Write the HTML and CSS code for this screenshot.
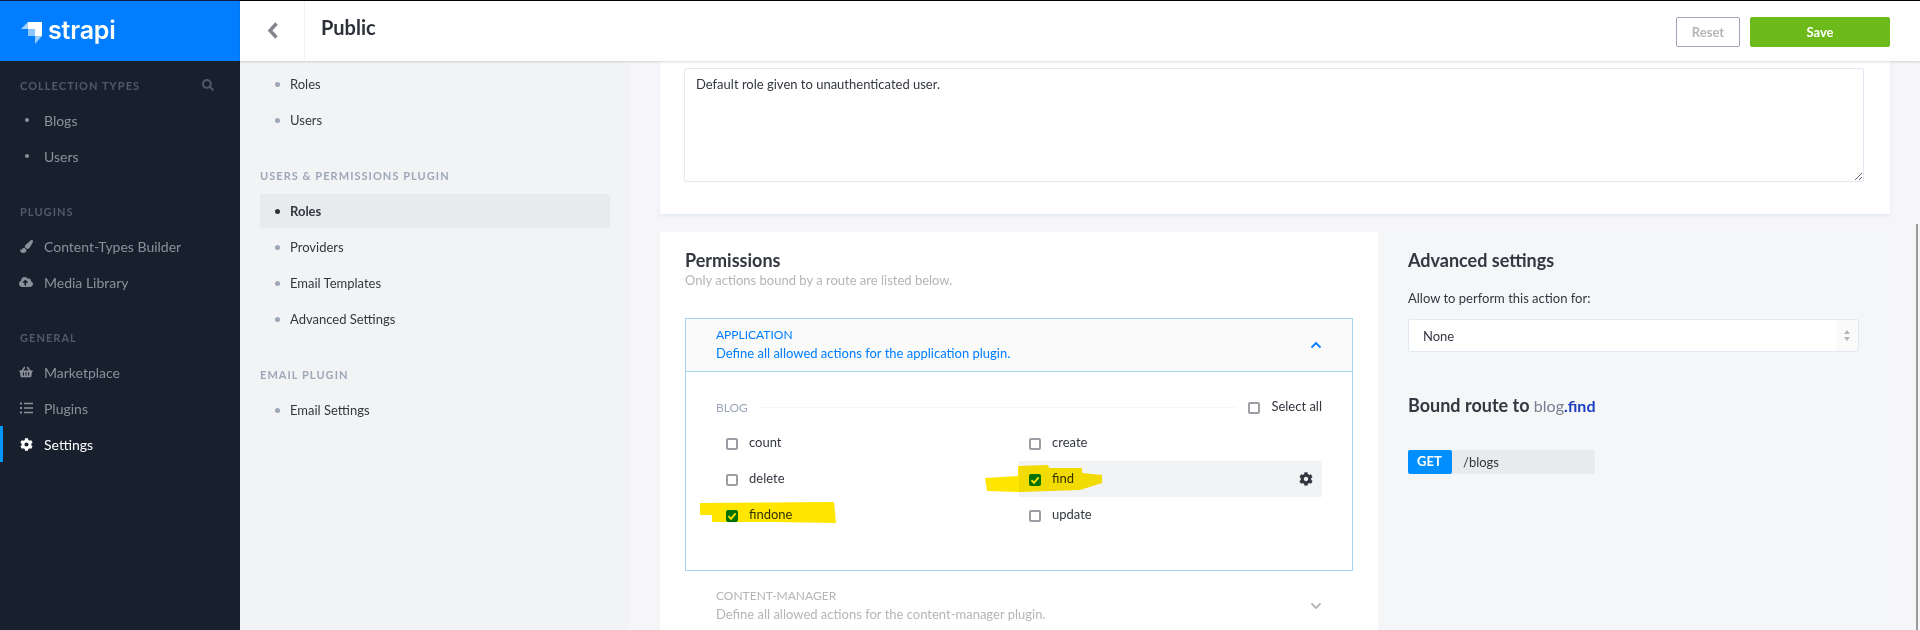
FILE: index.html
```html
<!DOCTYPE html>
<html>
  <head>
    <title>Public - Strapi</title>
    <link rel="stylesheet" href="styles.css">
  </head>
  <body>
    <svg class="defs" width="0" height="0">
      <symbol id="cog" viewBox="0 0 512 512"><path d="M487.4 315.7l-42.6-24.6c4.3-23.2 4.3-47 0-70.2l42.6-24.6c4.9-2.8 7.1-8.6 5.5-14-11.1-35.6-30-67.8-54.7-94.6-3.8-4.1-10-5.1-14.8-2.3L380.8 110c-17.9-15.4-38.5-27.3-60.8-35.1V25.8c0-5.6-3.9-10.5-9.4-11.7-36.7-8.2-74.3-7.8-109.2 0-5.5 1.2-9.4 6.1-9.4 11.7V75c-22.2 7.9-42.8 19.8-60.8 35.1L88.7 85.5c-4.9-2.8-11-1.9-14.8 2.3-24.7 26.7-43.6 58.9-54.7 94.6-1.7 5.4.6 11.2 5.5 14L67.3 221c-4.3 23.2-4.3 47 0 70.2l-42.6 24.6c-4.9 2.8-7.1 8.6-5.5 14 11.1 35.6 30 67.8 54.7 94.6 3.8 4.1 10 5.1 14.8 2.3l42.6-24.6c17.9 15.4 38.5 27.3 60.8 35.1v49.2c0 5.6 3.9 10.5 9.4 11.7 36.7 8.2 74.3 7.8 109.2 0 5.5-1.2 9.4-6.1 9.4-11.7v-49.2c22.2-7.9 42.8-19.8 60.8-35.1l42.6 24.6c4.9 2.8 11 1.9 14.8-2.3 24.7-26.7 43.6-58.9 54.7-94.6 1.5-5.5-.7-11.3-5.6-14.1zM256 336c-44.1 0-80-35.9-80-80s35.9-80 80-80 80 35.9 80 80-35.9 80-80 80z"/></symbol>
      <symbol id="tick" viewBox="0 0 12 12"><path d="M2.5 6.2l2.5 2.6 4.6-5.4" fill="none" stroke="#fff" stroke-width="1.8"/></symbol>
    </svg>

    <!-- Left sidebar -->
    <aside class="sidebar">
      <div class="brand">
        <svg class="brand-mark" width="22" height="23" viewBox="0 0 22 23">
          <path d="M7 0H21V14H14V7H7Z" fill="#fff"/>
          <path d="M7 0V7H0Z" fill="#fff" opacity=".65"/>
          <path d="M7 7H14V14H7Z" fill="#fff" opacity=".55"/>
          <path d="M14 14H21L14 22Z" fill="#fff" opacity=".6"/>
        </svg>
        <span class="brand-name">strapi</span>
      </div>
      <nav class="side-nav">
        <div class="side-title">
          <span>Collection Types</span>
          <svg class="side-search" width="12" height="12" viewBox="0 0 512 512"><path d="M505 442.7L405.3 343c-4.5-4.5-10.6-7-17-7H372c27.6-35.3 44-79.7 44-128C416 93.1 322.9 0 208 0S0 93.1 0 208s93.1 208 208 208c48.3 0 92.7-16.4 128-44v16.3c0 6.4 2.5 12.5 7 17l99.7 99.7c9.4 9.4 24.6 9.4 33.9 0l28.3-28.3c9.4-9.4 9.4-24.6.1-34zM208 336c-70.7 0-128-57.2-128-128 0-70.7 57.2-128 128-128 70.7 0 128 57.2 128 128 0 70.7-57.2 128-128 128z"/></svg>
        </div>
        <a class="side-link"><span class="side-icon"><i class="side-dot"></i></span>Blogs</a>
        <a class="side-link"><span class="side-icon"><i class="side-dot"></i></span>Users</a>

        <div class="side-title side-gap"><span>Plugins</span></div>
        <a class="side-link">
          <span class="side-icon"><svg width="13" height="13" viewBox="0 0 512 512"><path d="M167.02 309.34c-40.12 2.58-76.53 17.86-97.19 72.3-2.35 6.21-8 9.98-14.59 9.98-11.11 0-45.46-27.67-55.25-34.35C0 439.62 37.93 512 128 512c75.86 0 128-43.77 128-120.19 0-3.11-.65-6.08-.97-9.13l-88.01-73.34zM457.89 0c-15.16 0-29.37 6.71-40.21 16.45C213.27 199.05 192 203.34 192 257.09c0 13.7 3.25 26.76 8.73 38.7l63.82 53.18c7.21 1.8 14.64 3.03 22.39 3.03 62.11 0 98.11-45.47 211.16-256.46 7.38-14.35 13.9-29.85 13.9-45.99C512 20.64 486 0 457.89 0z"/></svg></span>
          Content-Types Builder
        </a>
        <a class="side-link">
          <span class="side-icon"><svg width="14" height="12" viewBox="0 0 640 512"><path d="M537.6 226.6c4.1-10.7 6.4-22.4 6.4-34.6 0-53-43-96-96-96-19.7 0-38.1 6-53.3 16.2C367 64.2 315.3 32 256 32c-88.4 0-160 71.6-160 160 0 2.7.1 5.4.2 8.1C40.2 219.8 0 273.2 0 336c0 79.5 64.5 144 144 144h368c70.7 0 128-57.3 128-128 0-61.9-44-113.6-102.4-125.4zM393.4 288H328v112c0 8.8-7.2 16-16 16h-48c-8.8 0-16-7.2-16-16V288h-65.4c-14.3 0-21.4-17.2-11.3-27.3l105.4-105.4c6.2-6.2 16.4-6.2 22.6 0l105.4 105.4c10.1 10.1 2.9 27.3-11.3 27.3z"/></svg></span>
          Media Library
        </a>

        <div class="side-title side-gap"><span>General</span></div>
        <a class="side-link">
          <span class="side-icon"><svg width="14" height="12" viewBox="0 0 576 512"><path d="M576 216v16c0 13.255-10.745 24-24 24h-8l-26.113 182.788C514.509 462.435 494.257 480 470.37 480H105.63c-23.887 0-44.139-17.565-47.518-41.212L32 256h-8c-13.255 0-24-10.745-24-24v-16c0-13.255 10.745-24 24-24h67.341l106.78-146.821c10.395-14.292 30.407-17.453 44.701-7.058 14.293 10.395 17.453 30.408 7.058 44.701L170.477 192h235.046L326.12 82.821c-10.395-14.292-7.234-34.306 7.059-44.701 14.291-10.395 34.306-7.235 44.701 7.058L484.659 192H552c13.255 0 24 10.745 24 24zM312 392V280c0-13.255-10.745-24-24-24s-24 10.745-24 24v112c0 13.255 10.745 24 24 24s24-10.745 24-24zm112 0V280c0-13.255-10.745-24-24-24s-24 10.745-24 24v112c0 13.255 10.745 24 24 24s24-10.745 24-24zm-224 0V280c0-13.255-10.745-24-24-24s-24 10.745-24 24v112c0 13.255 10.745 24 24 24s24-10.745 24-24z"/></svg></span>
          Marketplace
        </a>
        <a class="side-link">
          <span class="side-icon"><svg width="13" height="12" viewBox="0 0 13 12"><path d="M0 0.5h2v2H0zM4 0.7h9v1.6H4zM0 5h2v2H0zM4 5.2h9v1.6H4zM0 9.5h2v2H0zM4 9.7h9v1.6H4z"/></svg></span>
          Plugins
        </a>
        <a class="side-link side-link-active">
          <span class="side-icon"><svg width="13" height="13"><use href="#cog"/></svg></span>
          Settings
        </a>
      </nav>
    </aside>

    <div class="main">
      <!-- Top bar -->
      <header class="topbar">
        <button class="back-btn">
          <svg width="12" height="17" viewBox="0 0 12 17"><path d="M9.5 1.5L3 8.5l6.500 7" fill="none" stroke="#81848a" stroke-width="3.400"/></svg>
        </button>
        <h1 class="page-title">Public</h1>
        <div class="top-actions">
          <button class="btn-reset">Reset</button>
          <button class="btn-save">Save</button>
        </div>
      </header>

      <div class="body">
        <!-- Settings sub navigation -->
        <nav class="subnav">
          <a class="sub-link">Roles</a>
          <a class="sub-link">Users</a>
          <div class="sub-title">Users &amp; Permissions Plugin</div>
          <a class="sub-link sub-link-active">Roles</a>
          <a class="sub-link">Providers</a>
          <a class="sub-link">Email Templates</a>
          <a class="sub-link">Advanced Settings</a>
          <div class="sub-title sub-title-tight">Email Plugin</div>
          <a class="sub-link">Email Settings</a>
        </nav>

        <main class="content">
          <section class="desc-card">
            <textarea class="desc-input">Default role given to unauthenticated user.</textarea>
          </section>

          <section class="perm-card">
            <div class="perm-left">
              <h2 class="card-title">Permissions</h2>
              <p class="card-sub">Only actions bound by a route are listed below.</p>

              <div class="acc acc-open">
                <div class="acc-head">
                  <div>
                    <div class="acc-name">Application</div>
                    <div class="acc-desc">Define all allowed actions for the application plugin.</div>
                  </div>
                  <svg class="acc-arrow" width="12" height="8" viewBox="0 0 12 8"><path d="M1.500 6.500L6 2l4.500 4.500" fill="none" stroke="#007eff" stroke-width="1.800"/></svg>
                </div>
                <div class="acc-body">
                  <div class="ctrl-head">
                    <span class="ctrl-name">Blog</span>
                    <span class="ctrl-line"></span>
                    <label class="select-all"><span class="box"></span>Select all</label>
                  </div>
                  <div class="perm-grid">
                    <label class="perm"><span class="box"></span>count</label>
                    <label class="perm"><span class="box"></span>create</label>
                    <label class="perm"><span class="box"></span>delete</label>
                    <label class="perm perm-hover">
                      <span class="box box-on"><svg width="12" height="12"><use href="#tick"/></svg></span>find
                      <svg class="perm-cog" width="14" height="14"><use href="#cog"/></svg>
                      <svg class="marker marker-find" width="117" height="27" viewBox="0 0 117 27"><path d="M33 1L63 0L64 3L97 3L97 8L117 10L117 18L95 25L35 27L2 26L0 13L33 11Z"/></svg>
                    </label>
                    <label class="perm">
                      <span class="box box-on"><svg width="12" height="12"><use href="#tick"/></svg></span>findone
                      <svg class="marker marker-findone" width="136" height="21" viewBox="0 0 136 21"><path d="M0 1L134 0L136 21L75 20L12 20L12 13L0 13Z"/></svg>
                    </label>
                    <label class="perm"><span class="box"></span>update</label>
                  </div>
                </div>
              </div>

              <div class="acc">
                <div class="acc-head">
                  <div>
                    <div class="acc-name">Content-Manager</div>
                    <div class="acc-desc">Define all allowed actions for the content-manager plugin.</div>
                  </div>
                  <svg class="acc-arrow" width="12" height="8" viewBox="0 0 12 8"><path d="M1.500 1.500L6 6l4.500-4.500" fill="none" stroke="#b3b5b9" stroke-width="1.800"/></svg>
                </div>
              </div>
            </div>

            <div class="perm-right">
              <h2 class="card-title">Advanced settings</h2>
              <div class="field-label">Allow to perform this action for:</div>
              <div class="select-wrap">
                <select class="select"><option>None</option></select>
                <span class="select-arrows">
                  <svg width="6" height="11" viewBox="0 0 6 11"><path d="M3 0l3 4H0zM3 11L0 7h6z" fill="#b3b5bb"/></svg>
                </span>
              </div>
              <h2 class="card-title route-title">Bound route to <span class="route-ctrl">blog</span><span class="route-act">.find</span></h2>
              <div class="route">
                <span class="route-verb">GET</span>
                <span class="route-path">/blogs</span>
              </div>
            </div>
          </section>
        </main>
      </div>
    </div>

    <div class="scroll-thumb"></div>
  </body>
</html>
```

FILE: styles.css
```css
/* Page frame */
* {
  box-sizing: border-box;
}

html,
body {
  height: 100%;
}

body {
  margin: 0;
  display: flex;
  height: 630px;
  overflow: hidden;
  background-color: #f6f6f9;
  color: #333740;
  font-family: Lato, "Open Sans", sans-serif;
  font-size: 13px;
}

.defs {
  position: absolute;
}

/* Sidebar */
.sidebar {
  flex: 0 0 240px;
  background-color: #18202e;
}

.brand {
  display: flex;
  align-items: center;
  height: 61px;
  padding-left: 21px;
  background-color: #007eff;
  border-top: 1px solid #0b1c4a;
}

.brand-name {
  margin: -3px 0 0 5px;
  color: #fff;
  font-family: Inter, sans-serif;
  font-size: 25px;
  font-weight: 600;
  letter-spacing: -0.2px;
}

.brand-mark {
  margin-top: 4px;
}

.side-nav {
  padding-top: 15px;
}

.side-title {
  display: flex;
  align-items: center;
  justify-content: space-between;
  height: 18px;
  margin-bottom: 8px;
  padding: 0 26px 0 20px;
  color: #535a67;
  font-size: 11px;
  font-weight: 700;
  letter-spacing: 1.05px;
  text-transform: uppercase;
}

.side-gap {
  margin-top: 28px;
}

.side-search {
  fill: #535a67;
}

.side-link {
  display: flex;
  align-items: center;
  height: 36px;
  padding-left: 19px;
  color: #8b919c;
  font-size: 14px;
}

.side-link svg {
  fill: #8b919c;
}

.side-icon {
  display: flex;
  align-items: center;
  justify-content: center;
  width: 14px;
  margin-right: 11px;
}

.side-dot {
  width: 4px;
  height: 4px;
  margin-left: 2px;
  border-radius: 50%;
  background-color: #8b919c;
}

.side-link-active {
  color: #fff;
  box-shadow: inset 3px 0 0 #0097f7;
}

.side-link-active svg {
  fill: #fff;
}

/* Main column */
.main {
  display: flex;
  flex: 1;
  flex-direction: column;
  min-width: 0;
}

.topbar {
  position: relative;
  z-index: 2;
  display: flex;
  flex: 0 0 61px;
  background-color: #fff;
  border-top: 1px solid #000;
  box-shadow: 0 1px 2px rgba(40, 42, 49, 0.18);
}

.back-btn {
  width: 65px;
  padding: 0 0 0 1px;
  background: none;
  border: none;
  border-right: 1px solid #f3f3f4;
}

.back-btn svg {
  margin-top: 1px;
}

.page-title {
  margin: 12px 0 0 16px;
  color: #2c3039;
  font-size: 20px;
  font-weight: 700;
  line-height: 28px;
}

.top-actions {
  display: flex;
  gap: 10px;
  margin: 16px 30px 0 auto;
}

.top-actions button {
  height: 30px;
  border-radius: 2px;
  font-family: inherit;
  font-size: 13px;
  font-weight: 700;
}

.btn-reset {
  width: 64px;
  background-color: #fff;
  border: 1px solid #9ea7b8;
  color: #b4b6ba;
}

.btn-save {
  width: 140px;
  background-color: #6dbb1a;
  border: none;
  color: #fff;
}

.body {
  display: flex;
  flex: 1;
  min-height: 0;
}

/* Settings sub navigation */
.subnav {
  flex: 0 0 389px;
  padding: 5px 19px 0 20px;
  background-color: #f2f3f4;
}

.sub-link {
  display: flex;
  align-items: center;
  gap: 10px;
  height: 36px;
  padding-left: 15px;
  color: #333740;
  font-size: 13px;
}

.sub-link::before {
  content: "";
  width: 5px;
  height: 5px;
  border-radius: 50%;
  background-color: #9ea7b8;
}

.sub-link-active {
  height: 34px;
  margin: 1px 0;
  border-radius: 2px;
  background-color: #e9eaeb;
  font-weight: 700;
}

.sub-link-active::before {
  background-color: #2d3138;
}

.sub-title {
  height: 18px;
  margin: 29px 0 9px;
  color: #9ea7b8;
  font-size: 11px;
  font-weight: 700;
  letter-spacing: 1.05px;
  line-height: 18px;
  text-transform: uppercase;
}

.sub-title-tight {
  margin-bottom: 8px;
}

/* Content */
.content {
  flex: 1;
  min-width: 0;
  padding: 0 30px 0 31px;
}

.desc-card {
  height: 153px;
  padding: 7px 26px 0 24px;
  background-color: #fff;
  box-shadow: 0 2px 4px #e3e9f3;
}

.desc-input {
  display: block;
  width: 100%;
  height: 114px;
  padding: 7px 11px;
  border: 1px solid #e3e9f3;
  border-radius: 2px;
  color: #333740;
  font-family: inherit;
  font-size: 13px;
  line-height: 16px;
  outline: none;
}

.perm-card {
  display: flex;
  height: 398px;
  margin-top: 18px;
}

.perm-left {
  flex: 0 0 718px;
  padding: 17px 25px 0;
  background-color: #fff;
}

.perm-right {
  flex: 1;
  padding: 17px 31px 0 30px;
  background-color: #f5f6f8;
}

.card-title {
  margin: 0;
  color: #333740;
  font-size: 18px;
  font-weight: 700;
  line-height: 22px;
}

.card-sub {
  margin: 0 0 29px;
  color: #b3b5b9;
  font-size: 13px;
  line-height: 18px;
}

/* Accordion */
.acc {
  margin-bottom: 8px;
  border: 1px solid transparent;
}

.acc-open {
  border-color: #a5d5ee;
}

.acc-head {
  display: flex;
  align-items: center;
  justify-content: space-between;
  height: 53px;
  padding: 8px 30px 9px;
  color: #b3b5b9;
}

.acc-open .acc-head {
  background-color: #fafafb;
  border-bottom: 1px solid #a5d5ee;
  color: #007eff;
}

.acc-name {
  font-size: 12px;
  line-height: 16px;
  text-transform: uppercase;
}

.acc-desc {
  font-size: 13px;
  line-height: 20px;
}

.acc-body {
  height: 198px;
  padding: 23px 30px 0;
}

.ctrl-head {
  display: flex;
  align-items: center;
  height: 24px;
  margin-bottom: 6px;
}

.ctrl-name {
  color: #9ea7b8;
  font-size: 12px;
  text-transform: uppercase;
}

.ctrl-line {
  flex: 1;
  height: 1px;
  margin: 0 12px;
  background-color: #f6f6f6;
}

.select-all {
  display: flex;
  align-items: center;
  gap: 11px;
  height: 24px;
  padding-bottom: 2px;
  color: #333740;
}

.perm-grid {
  display: grid;
  grid-template-columns: 303px 303px;
  grid-auto-rows: 36px;
}

.perm {
  position: relative;
  display: flex;
  align-items: center;
  gap: 11px;
  padding: 0 0 2px 10px;
  color: #333740;
}

.perm-hover {
  background-color: #f2f3f4;
}

.perm-cog {
  margin: 2px 9px 0 auto;
  fill: #333740;
}

.box {
  display: block;
  flex: 0 0 12px;
  width: 12px;
  height: 12px;
  margin-top: 4px;
  border: 2px solid #9c9ea4;
  border-radius: 2px;
  background-color: #fff;
}

.box svg {
  display: block;
  margin: -2px;
}

.box-on {
  background-color: #007eff;
  border-color: #007eff;
}

/* Highlighter strokes painted over the screenshot */
.marker {
  position: absolute;
  fill: #ffe600;
  mix-blend-mode: multiply;
  pointer-events: none;
}

.marker-find {
  left: -34px;
  top: 4px;
}

.marker-findone {
  left: -16px;
  top: 5px;
}

/* Advanced settings panel */
.field-label {
  margin-top: 18px;
  color: #333740;
  line-height: 18px;
}

.select-wrap {
  position: relative;
  height: 33px;
  margin-top: 12px;
}

.select {
  width: 100%;
  height: 33px;
  padding: 0 14px;
  appearance: none;
  background-color: #fff;
  border: 1px solid #e3e9f3;
  border-radius: 2px;
  color: #333740;
  font-family: inherit;
  font-size: 13px;
}

.select-arrows {
  position: absolute;
  top: 1px;
  right: 1px;
  bottom: 1px;
  display: flex;
  align-items: center;
  justify-content: center;
  width: 22px;
  background-color: #fafafb;
}

.route-title {
  margin-top: 42px;
}

.route-ctrl {
  color: #787e8f;
  font-size: 16px;
  font-weight: 400;
}

.route-act {
  color: #1c3fc0;
  font-size: 16px;
}

.route {
  display: flex;
  align-items: center;
  width: 187px;
  height: 24px;
  margin-top: 33px;
  border-radius: 2px;
  background-color: #e9eaeb;
}

.route-verb {
  width: 44px;
  height: 24px;
  padding-left: 9px;
  border-radius: 2px;
  background-color: #008fff;
  color: #fff;
  font-weight: 700;
  line-height: 23px;
}

.route-path {
  margin: -1px 0 0 11px;
  color: #333740;
}

.scroll-thumb {
  position: absolute;
  top: 224px;
  right: 2px;
  bottom: 0;
  width: 2px;
  background-color: #9a9a9a;
}
```
